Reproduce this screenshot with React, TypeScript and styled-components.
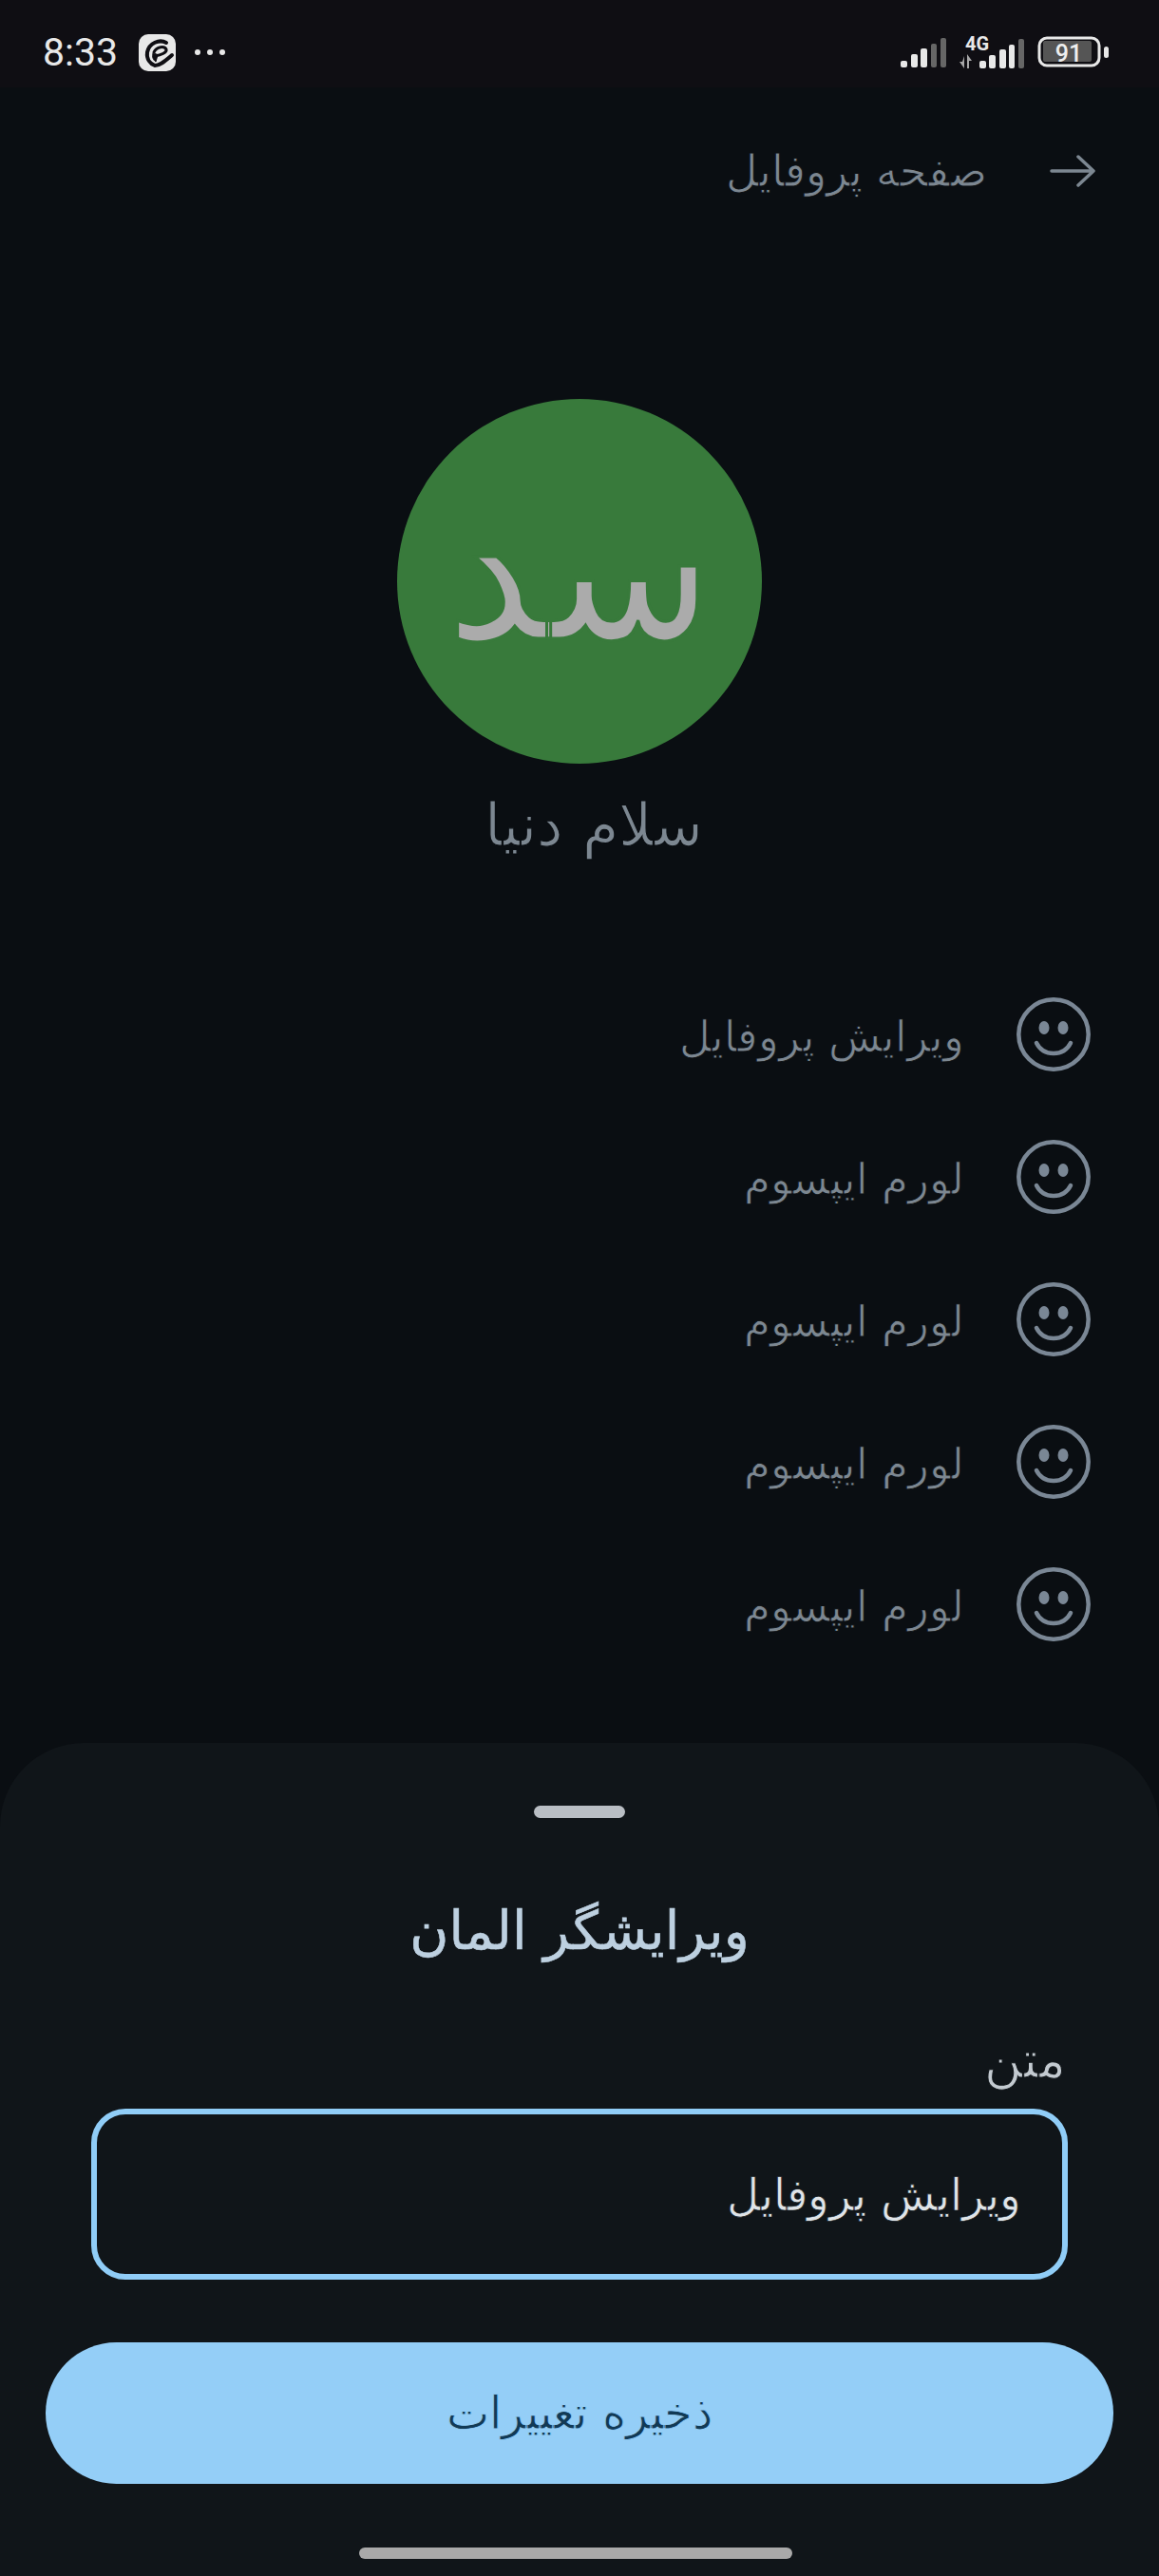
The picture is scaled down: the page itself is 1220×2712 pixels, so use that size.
import styled, { createGlobalStyle, css } from 'styled-components';

const ROW_LABELS = ['ویرایش پروفایل', 'لورم ایپسوم', 'لورم ایپسوم', 'لورم ایپسوم', 'لورم ایپسوم'];
const FONT = `'DejaVu Sans ExtraLight', 'DejaVu Sans', sans-serif`;

// DejaVu only ships a regular arabic cut, so eat into the glyphs with the surface colour
const thin = (surface: string, width = 0.9) => css`
  -webkit-text-stroke: ${width}px ${surface};
`;

const GlobalStyle = createGlobalStyle`
  html, body {
    margin: 0;
    padding: 0;
    background: #0a0e12;
  }
`;

const Screen = styled.div`
  width: 1220px;
  height: 2712px;
  display: flex;
  flex-direction: column;
  overflow: hidden;
  background: #0a0e12;
  font-family: ${FONT};
  font-weight: 200;
`;

const StatusBar = styled.div`
  height: 92px;
  flex: none;
  display: flex;
  align-items: center;
  justify-content: space-between;
  box-sizing: border-box;
  padding: 24px 52px 6px 45px;
  background: #0f0e13;
  color: #e8e8e8;
`;

const StatusGroup = styled.div`
  display: flex;
  align-items: center;
`;

const Time = styled.span`
  font-family: 'Roboto', sans-serif;
  font-size: 41px;
  font-weight: 400;
  margin-right: 22px;
`;

const Header = styled.div`
  display: flex;
  align-items: center;
  gap: 66px;
  height: 60px;
  margin-top: 58px;
  padding-right: 67px;
  direction: rtl;
  color: #7c8791;
  font-size: 45.500px;
  ${thin('#0a0e12')}
`;

const Profile = styled.div`
  display: flex;
  flex-direction: column;
  align-items: center;
  margin-top: 210px;
`;

const Avatar = styled.div`
  width: 384px;
  height: 384px;
  box-sizing: border-box;
  padding-bottom: 24px;
  border-radius: 50%;
  background: #387a3b;
  color: #ababab;
  font-size: 207px;
  display: flex;
  align-items: center;
  justify-content: center;
  font-weight: 400;
  ${thin('#387a3b', 3)}
`;

const Name = styled.div`
  margin-top: 34px;
  padding-left: 30px;
  height: 62px;
  line-height: 62px;
  color: #7c8791;
  font-size: 62px;
  direction: rtl;
  ${thin('#0a0e12', 1.2)}
`;

const Menu = styled.div`
  display: flex;
  flex-direction: column;
  gap: 72px;
  margin-top: 150px;
  padding-right: 72px;
  direction: rtl;
`;

const MenuRow = styled.div`
  display: flex;
  align-items: center;
  gap: 55px;
  height: 78px;
  color: #7c8791;
  font-size: 45px;
  ${thin('#0a0e12')}

  & > span {
    padding-top: 4px;
  }
`;

const Sheet = styled.div`
  margin-top: auto;
  height: 877px;
  flex: none;
  box-sizing: border-box;
  display: flex;
  flex-direction: column;
  align-items: center;
  padding-top: 66px;
  border-radius: 88px 88px 0 0;
  background: #101519;
`;

const Handle = styled.div`
  width: 96px;
  height: 13px;
  border-radius: 7px;
  background: #b9bec4;
`;

const SheetTitle = styled.div`
  margin-top: 83px;
  height: 72px;
  line-height: 72px;
  color: #bdd0e0;
  font-size: 56px;
  font-weight: 400;
  -webkit-text-stroke: 0.6px #bdd0e0;
  direction: rtl;
`;

const FieldLabel = styled.div`
  align-self: flex-end;
  margin: 70px 98px 0 0;
  height: 60px;
  line-height: 60px;
  color: #c3cad0;
  font-size: 54px;
  direction: rtl;
  ${thin('#101519', 1.1)}
`;

const FieldBox = styled.div`
  width: 1028px;
  height: 180px;
  flex: none;
  box-sizing: border-box;
  margin-top: 21px;
  padding: 0 43px;
  display: flex;
  align-items: center;
  direction: rtl;
  border: 6px solid #90cdf7;
  border-radius: 36px;
  color: #dfe4e8;
  font-size: 47px;
  ${thin('#101519', 0.7)}
`;

const SaveButton = styled.div`
  width: 1124px;
  height: 149px;
  margin-top: 66px;
  flex: none;
  display: flex;
  align-items: center;
  justify-content: center;
  border-radius: 75px;
  background: #94cef7;
  color: #123a55;
  font-size: 47.500px;
  direction: rtl;
  ${thin('#94cef7', 0.8)}
`;

const HomeBar = styled.div`
  width: 456px;
  height: 12px;
  margin: 67px 8px 0 0;
  flex: none;
  border-radius: 6px;
  background: #a9a9a9;
`;

const Dots = styled.span`
  display: flex;
  gap: 7px;
  margin-left: 20px;
  & > i {
    width: 6px;
    height: 6px;
    border-radius: 50%;
    background: #e8e8e8;
  }
`;

const StatusIcons = styled(StatusGroup)`
  gap: 14px;
`;

const Smile = () => (
  <svg width="78" height="78" viewBox="0 0 78 78" fill="none">
    <circle cx="39" cy="39" r="36.700" stroke="#7a8795" strokeWidth="4.500" />
    <ellipse cx="29" cy="32" rx="5.500" ry="7" fill="#7a8795" />
    <ellipse cx="49" cy="32" rx="5.500" ry="7" fill="#7a8795" />
    <path d="M21 48c4 8 11 11 18 11s14-3 18-11" stroke="#7a8795" strokeWidth="4.500" strokeLinecap="round" />
  </svg>
);

const BackArrow = () => (
  <svg width="48" height="36" viewBox="0 0 48 36" fill="none" stroke="#7c8791" strokeWidth="3.500" strokeLinecap="round" strokeLinejoin="round">
    <path d="M2 18h44M30 3l16 15-16 15" />
  </svg>
);

const AppLogo = () => (
  <svg width="39" height="39" viewBox="0 0 39 39" fill="none" stroke="#0f0e13" strokeLinecap="round">
    <rect width="39" height="39" rx="10" fill="#e8e8e8" stroke="none" />
    <path d="M29 9C22 5 11 9 9 19c-1 7 3 12 8 14 6 0 12-6 18-11" strokeWidth="4" />
    <path d="M16 19c3-6 11-7 13-3 1 3-5 6-12 7" strokeWidth="3" />
    <path d="M15 20c-1 4 0 7 3 9l2-7z" fill="#0f0e13" strokeWidth="1" />
  </svg>
);

const Signal = () => (
  <svg width="48" height="31" viewBox="0 0 48 31">
    <rect x="0" y="24" width="7" height="7" rx="2" fill="#e8e8e8" />
    <rect x="11" y="17" width="7" height="14" rx="2" fill="#e8e8e8" />
    <rect x="21" y="11" width="7" height="20" rx="2" fill="#e8e8e8" />
    <rect x="32" y="6" width="6" height="25" rx="2" fill="#666" />
    <rect x="42" y="0" width="6" height="31" rx="2" fill="#666" />
  </svg>
);

const SignalWithData = () => (
  <svg width="68" height="34" viewBox="0 0 68 34" overflow="visible">
    <text x="6" y="15" fill="#e8e8e8" fontFamily="Roboto, sans-serif" fontWeight="700" fontSize="20">4G</text>
    <path d="M5 21v13L0 27h3zM8 34V19l5 7h-3v8z" fill="#e8e8e8" opacity=".7" />
    <rect x="21" y="26" width="7" height="8" rx="2" fill="#e8e8e8" />
    <rect x="31" y="20" width="7" height="14" rx="2" fill="#e8e8e8" />
    <rect x="42" y="14" width="7" height="20" rx="2" fill="#e8e8e8" />
    <rect x="52" y="9" width="6" height="25" rx="2" fill="#e8e8e8" />
    <rect x="62" y="3" width="6" height="31" rx="2" fill="#666" />
  </svg>
);

const Battery = () => (
  <svg width="76" height="34" viewBox="0 0 76 34">
    <rect x="2" y="2" width="63" height="29" rx="8" fill="none" stroke="#e8e8e8" strokeWidth="3" />
    <rect x="6" y="5" width="51" height="22" rx="2" fill="#555" />
    <text x="33" y="27" textAnchor="middle" fill="#eeeeee" fontFamily="Roboto, sans-serif" fontWeight="500" fontSize="25">91</text>
    <rect x="70" y="11" width="5" height="12" rx="2.500" fill="#e8e8e8" />
  </svg>
);

export default function App() {
  return (
    <Screen>
      <GlobalStyle />
      <StatusBar>
        <StatusGroup>
          <Time>8:33</Time>
          <AppLogo />
          <Dots>
            <i />
            <i />
            <i />
          </Dots>
        </StatusGroup>
        <StatusIcons>
          <Signal />
          <SignalWithData />
          <Battery />
        </StatusIcons>
      </StatusBar>

      <Header>
        <BackArrow />
        <span>صفحه پروفایل</span>
      </Header>

      <Profile>
        <Avatar>سد</Avatar>
        <Name>سلام دنیا</Name>
      </Profile>

      <Menu>
        {ROW_LABELS.map((label, index) => (
          <MenuRow key={index}>
            <Smile />
            <span>{label}</span>
          </MenuRow>
        ))}
      </Menu>

      <Sheet>
        <Handle />
        <SheetTitle>ویرایشگر المان</SheetTitle>
        <FieldLabel>متن</FieldLabel>
        <FieldBox>ویرایش پروفایل</FieldBox>
        <SaveButton>ذخیره تغییرات</SaveButton>
        <HomeBar />
      </Sheet>
    </Screen>
  );
}
